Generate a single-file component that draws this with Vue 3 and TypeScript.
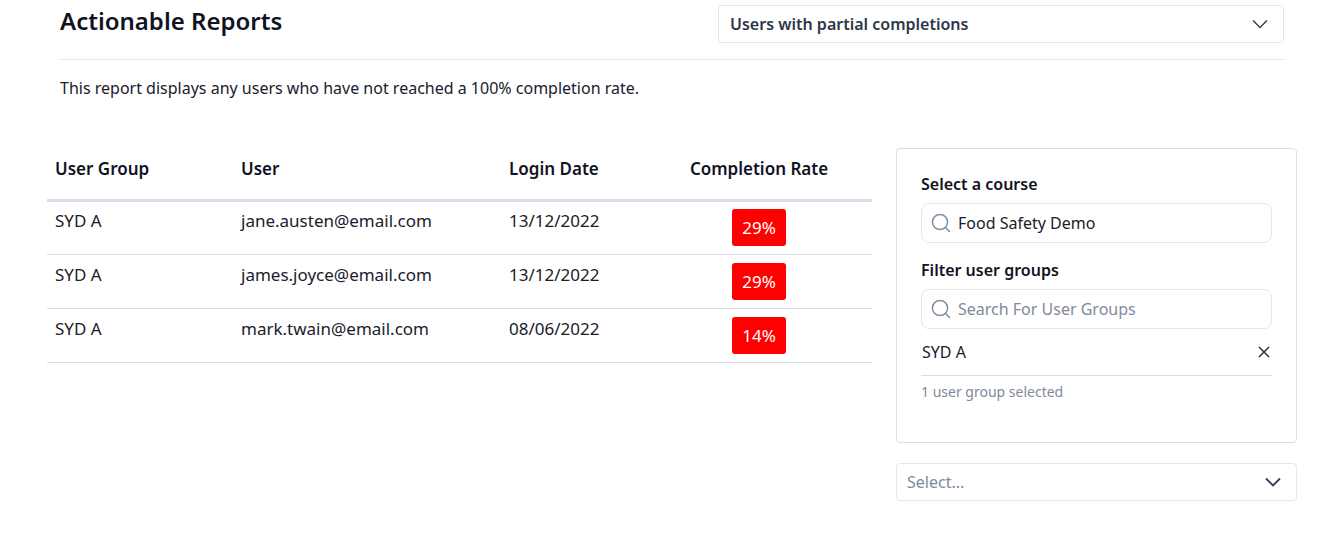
<script setup lang="ts">
interface Row { group: string; user: string; date: string; rate: string }
const rows: Row[] = [
  { group: 'SYD A', user: 'jane.austen@email.com', date: '13/12/2022', rate: '29%' },
  { group: 'SYD A', user: 'james.joyce@email.com', date: '13/12/2022', rate: '29%' },
  { group: 'SYD A', user: 'mark.twain@email.com', date: '08/06/2022', rate: '14%' },
]
</script>

<template>
  <div class="page">
    <section class="top">
      <header class="head">
        <h1>Actionable Reports</h1>
        <div class="select report-select">
          <span>Users with partial completions</span>
          <svg width="18" height="18" viewBox="0 0 18 18"><path d="M2 5.5 9 12.5l7-7" fill="none" stroke="#334155" stroke-width="1.5" /></svg>
        </div>
      </header>
      <p class="intro">This report displays any users who have not reached a 100% completion rate.</p>
    </section>
    <section class="main">
      <table class="table">
        <colgroup>
          <col class="c1" /><col class="c2" /><col class="c3" /><col class="c4" />
        </colgroup>
        <thead>
          <tr><th>User Group</th><th>User</th><th>Login Date</th><th class="center">Completion Rate</th></tr>
        </thead>
        <tbody>
          <tr v-for="r in rows" :key="r.user">
            <td>{{ r.group }}</td>
            <td>{{ r.user }}</td>
            <td>{{ r.date }}</td>
            <td class="center"><span class="badge">{{ r.rate }}</span></td>
          </tr>
        </tbody>
      </table>
      <aside class="side">
        <div class="panel">
          <label>Select a course</label>
          <div class="search">
            <svg width="20" height="20" viewBox="0 0 20 20"><circle cx="9" cy="9" r="7.6" fill="none" stroke="#8590a2" stroke-width="1.5" /><path d="m14.4 14.4 4.6 4.6" stroke="#8590a2" stroke-width="1.5" /></svg>
            <span>Food Safety Demo</span>
          </div>
          <label class="second">Filter user groups</label>
          <div class="search">
            <svg width="20" height="20" viewBox="0 0 20 20"><circle cx="9" cy="9" r="7.6" fill="none" stroke="#8590a2" stroke-width="1.5" /><path d="m14.4 14.4 4.6 4.6" stroke="#8590a2" stroke-width="1.5" /></svg>
            <span class="muted">Search For User Groups</span>
          </div>
          <div class="chosen">
            <span>SYD A</span>
            <svg width="12" height="12" viewBox="0 0 12 12"><path d="m1 1 10 10M11 1 1 11" stroke="#1a202c" stroke-width="1.4" /></svg>
          </div>
          <p class="count">1 user group selected</p>
        </div>
        <div class="select bottom-select">
          <span class="muted">Select...</span>
          <svg width="18" height="18" viewBox="0 0 18 18"><path d="M2 5.5 9 12.5l7-7" fill="none" stroke="#334155" stroke-width="1.8" /></svg>
        </div>
      </aside>
    </section>
  </div>
</template>

<style scoped>
.page {
  width: 1335px;
  height: 540px;
  overflow: hidden;
  background: #fff;
  color: #1a202c;
  font-family: "Noto Sans", sans-serif;
  font-size: 16px;
  box-sizing: border-box;
  padding-top: 5px;
}
.top { margin: 0 51px 0 60px; }
.head {
  display: flex;
  justify-content: space-between;
  align-items: flex-start;
  height: 54px;
  border-bottom: 1px solid #e2e8f0;
}
h1 {
  margin: 0;
  font-size: 24px;
  line-height: 32px;
  font-weight: 600;
  color: #10131f;
}
.select {
  display: flex;
  align-items: center;
  justify-content: space-between;
  height: 38px;
  box-sizing: border-box;
  border: 1px solid #e2e8f0;
  border-radius: 4px;
}
.report-select {
  width: 566px;
  padding: 0 14px 0 11px;
  font-weight: 600;
  color: #2d3748;
}
.intro {
  margin: 16px 0 0;
  line-height: 24px;
  color: #1a202c;
}
.main {
  display: flex;
  align-items: flex-start;
  margin: 48px 0 0 47px;
  gap: 24px;
}
.table {
  width: 825px;
  table-layout: fixed;
  border-collapse: collapse;
  font-size: 17px;
}
.c1 { width: 186px; }
.c2 { width: 268px; }
.c3 { width: 145px; }
.c4 { width: 226px; }
th {
  height: 52px;
  padding: 0 8px 10px;
  text-align: left;
  font-weight: 600;
  color: #10131f;
  border-bottom: 3px solid #d6dfe8;
  box-sizing: border-box;
}
td {
  height: 54px;
  padding: 0 8px 13px;
  box-sizing: border-box;
  border-bottom: 1px solid #d6dfe8;
  line-height: 24px;
}
.center { text-align: center; }
td.center { padding: 0 8px; }
.badge {
  display: inline-block;
  width: 54px;
  height: 37px;
  line-height: 37px;
  border-radius: 3px;
  background: #ff0000;
  color: #fff;
  vertical-align: middle;
}
.side { width: 401px; }
.panel {
  height: 295px;
  box-sizing: border-box;
  padding: 24px 24px 0;
  border: 1px solid #d6dfe8;
  border-radius: 4px;
}
label {
  display: block;
  height: 30px;
  font-weight: 600;
  line-height: 22px;
  color: #10131f;
}
.second { margin-top: 13px; height: 33px; line-height: 28px; }
.search {
  display: flex;
  align-items: center;
  gap: 7px;
  height: 40px;
  box-sizing: border-box;
  padding-left: 9px;
  border: 1px solid #e2e8f0;
  border-radius: 8px;
}
.muted { color: #808a9c; }
.chosen {
  display: flex;
  align-items: center;
  justify-content: space-between;
  height: 46px;
  padding: 0 2px 0 1px;
  border-bottom: 1px solid #d6dfe8;
}
.count {
  margin: 6px 0 0;
  font-size: 14px;
  line-height: 20px;
  color: #808a9c;
}
.bottom-select {
  margin-top: 20px;
  padding: 0 14px 0 10px;
}
</style>
